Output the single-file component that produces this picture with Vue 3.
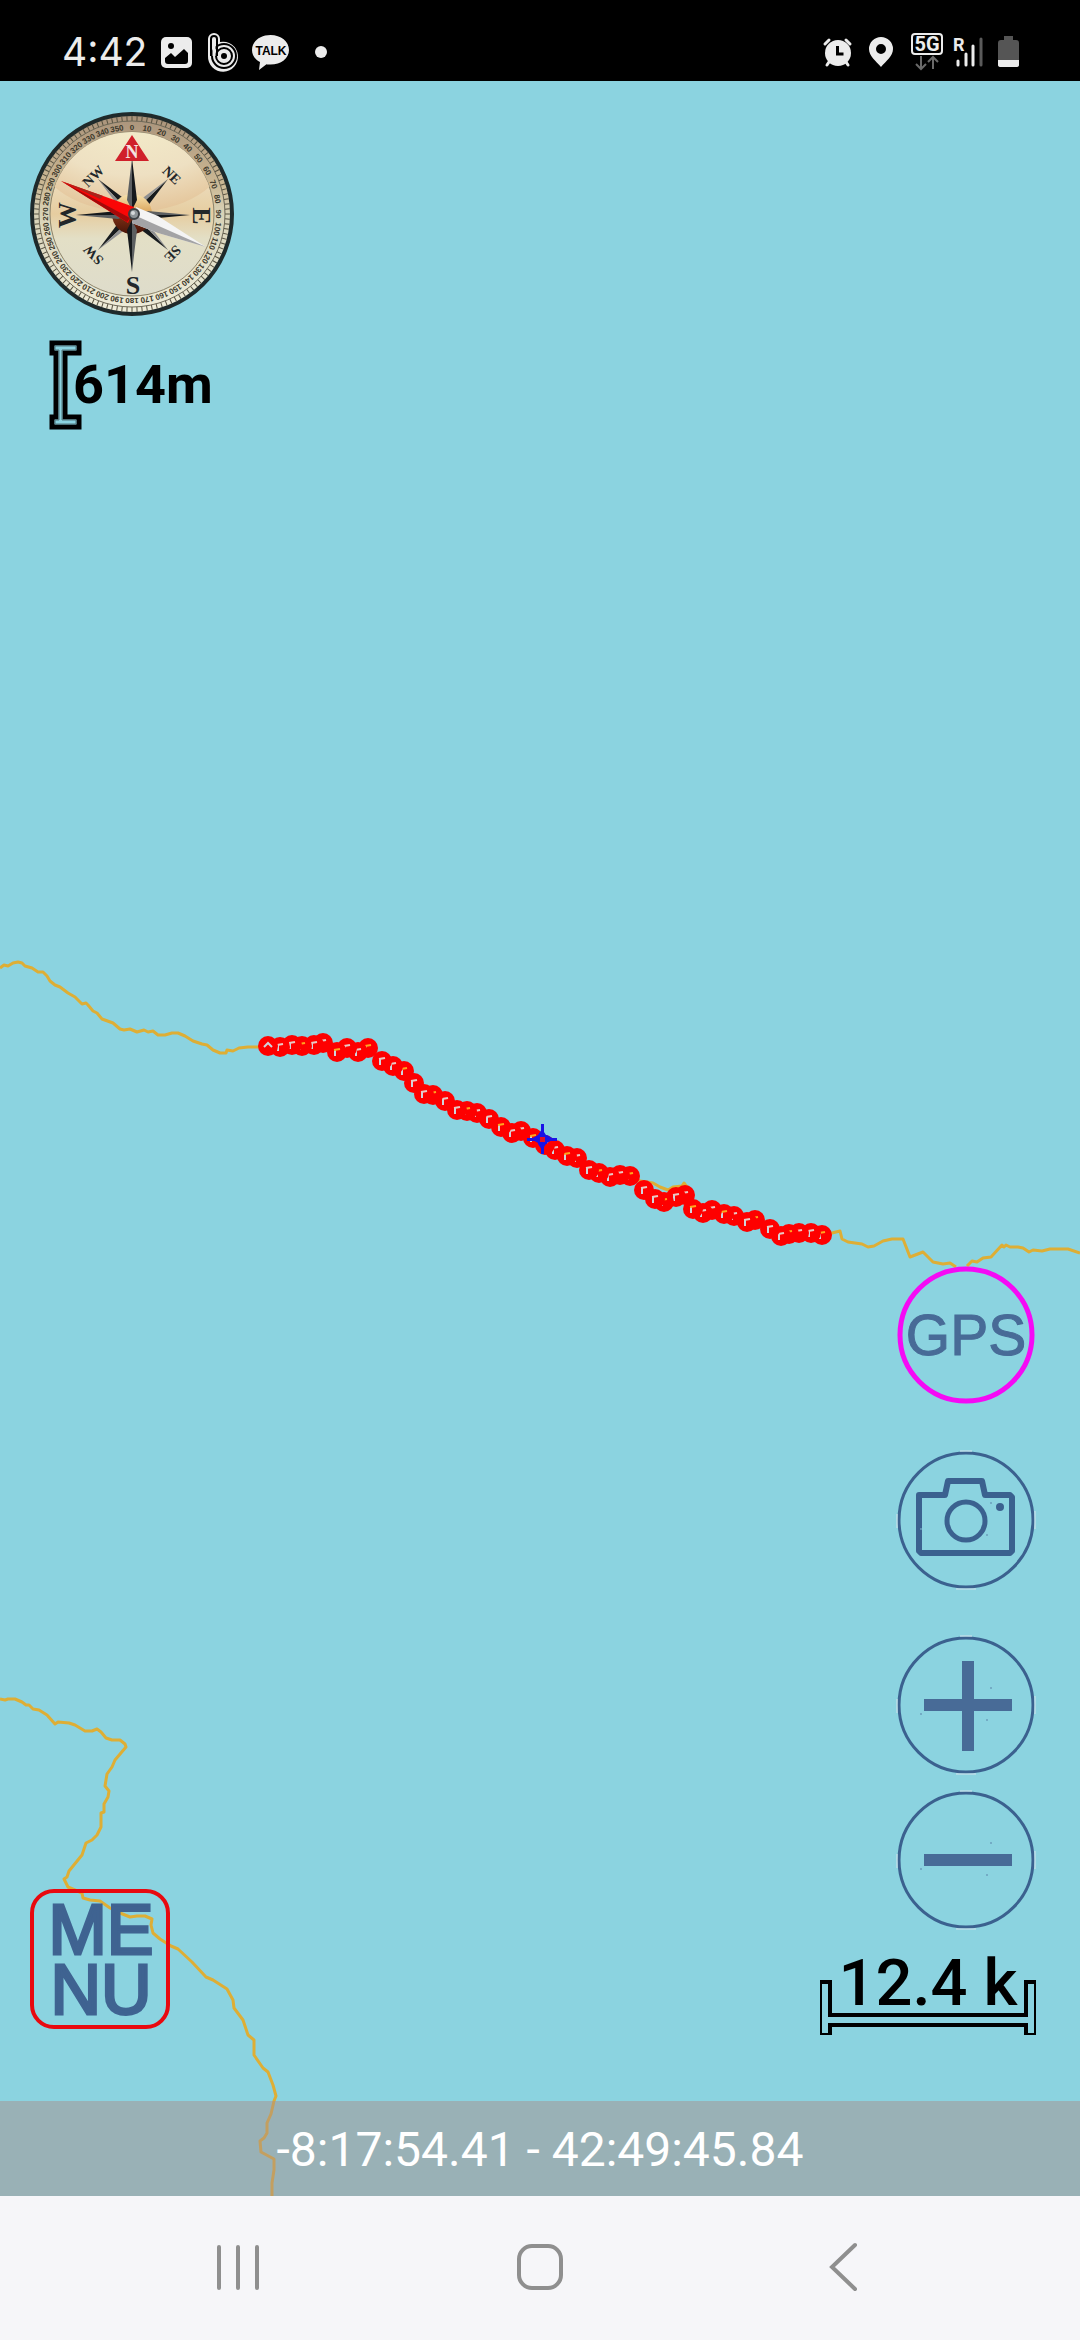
<script setup>
const trackPoints = [
  [268, 1046], [280, 1047], [292, 1045], [302, 1046], [314, 1045], [323, 1043],
  [337, 1052], [347, 1048], [358, 1052], [368, 1048], [382, 1061], [393, 1066],
  [404, 1071], [414, 1083], [424, 1094], [433, 1095], [445, 1101], [457, 1110],
  [467, 1111], [477, 1113], [489, 1119], [501, 1127], [512, 1133], [521, 1131],
  [533, 1138], [545, 1145], [555, 1150], [567, 1156], [577, 1158], [589, 1170],
  [599, 1173], [610, 1177], [620, 1175], [630, 1176], [644, 1190], [655, 1199],
  [664, 1202], [676, 1197], [685, 1195], [693, 1209], [703, 1213], [712, 1210],
  [724, 1214], [734, 1216], [747, 1222], [755, 1220], [770, 1229], [781, 1236],
  [789, 1234], [799, 1233], [811, 1233], [822, 1235],
].reverse()

const bearings = Array.from({ length: 36 }, (_, i) => i * 10)
const ticks = Array.from({ length: 120 }, (_, i) => i * 3)

const specks = [[95, 53], [25, 79], [91, 85]]
</script>

<template>
  <div class="screen">
    <header class="status">
      <div class="status-left">
        <time class="clock">4:42</time>
        <svg class="i-photo" width="31" height="31" viewBox="0 0 31 31" aria-hidden="true">
          <rect width="31" height="31" rx="5" fill="#ececec" />
          <circle cx="10" cy="9" r="3" fill="#000" />
          <path d="M4 24v-3l6-5 4 4 9-8 4 4v8q0 3-3 3H7q-3 0-3-3z" fill="#000" />
        </svg>
        <svg class="i-b" width="31" height="39" viewBox="0 0 31 39" fill="none" aria-hidden="true">
          <path d="M0 23V6a6 6 0 0 1 12 0v3a15 15 0 1 1-12 14z" fill="#ececec" />
          <path d="M3 23V6a3 3 0 0 1 6 0v17" stroke="#000" stroke-width="2" />
          <circle cx="16" cy="23" r="12" stroke="#000" stroke-width="2" />
          <circle cx="16" cy="23" r="8" stroke="#000" stroke-width="2" />
          <circle cx="16" cy="23" r="3" fill="#000" />
          <path d="M6 6v17" stroke="#ececec" stroke-width="3" />
        </svg>
        <svg class="i-talk" width="37" height="35" viewBox="0 0 37 35" aria-hidden="true">
          <path d="M18.500 0C29 0 37 6.500 37 15s-8 14.500-18.500 14.500c-2 0-3 0-4-.3L7 35l1-8C3 24.500 0 20 0 15 0 6.500 8 0 18.500 0z" fill="#ececec" />
          <text x="19" y="20" class="talk-text">TALK</text>
        </svg>
        <span class="dot"></span>
      </div>
      <div class="status-right">
        <svg width="29" height="29" viewBox="0 0 29 29" aria-hidden="true">
          <g stroke="#ececec" stroke-linecap="round" fill="none">
            <path d="M2 6l4-4M27 6l-4-4" stroke-width="3" />
            <path d="M6 24l-2 3M23 24l2 3" stroke-width="3" />
          </g>
          <circle cx="15" cy="15" r="13" fill="#ececec" />
          <path d="M14.500 8v8h6" fill="none" stroke="#000" stroke-width="3" />
        </svg>
        <svg class="i-pin" width="24" height="30" viewBox="0 0 24 30" aria-hidden="true">
          <path d="M12 0a12 12 0 0 1 12 12c0 7-7 12-12 18C7 24 0 19 0 12A12 12 0 0 1 12 0zm0 7a5 5 0 1 0 0 10 5 5 0 0 0 0-10z" fill="#ececec" fill-rule="evenodd" />
        </svg>
        <svg class="i-5g" width="32" height="38" viewBox="0 0 32 38" aria-hidden="true">
          <rect x="1" y="1" width="30" height="20" rx="3" fill="none" stroke="#ececec" stroke-width="2" />
          <text x="16" y="18" class="g5-text">5G</text>
          <path d="M10 23v12M5 31l5 5 5-5M22 36V24M17 29l5-5 5 5" fill="none" stroke="#6a6a6a" stroke-width="2" />
        </svg>
        <svg class="i-signal" width="31" height="30" viewBox="0 0 31 30" aria-hidden="true">
          <text x="0" y="14" class="r-text">R</text>
          <g stroke-width="3" stroke-linecap="round">
            <path d="M5 24v4M13 17v11M20 9v19" stroke="#ececec" />
            <path d="M28 2v26" stroke="#5a5a5a" />
          </g>
        </svg>
        <svg class="i-battery" width="21" height="32" viewBox="0 0 21 32" aria-hidden="true">
          <path d="M6 0h9v4h3q3 0 3 3v17H0V7q0-3 3-3h3z" fill="#555" />
          <path d="M0 24h21v5q0 2-3 2H3q-3 0-3-2z" fill="#ececec" />
        </svg>
      </div>
    </header>

    <main class="map">
      <svg class="map-layer" viewBox="0 81 1080 2115" preserveAspectRatio="xMidYMid slice" aria-hidden="true">
        <g fill="none" stroke="#deae35" stroke-width="3" stroke-linejoin="round">
          <polyline points="0,968 4,965 8,966 13,963 18,962 22,963 25,966 32,968 38,972 43,972 47,976 50,981 55,985 60,987 68,993 75,997 82,1004 86,1003 88,1005 93,1011 97,1013 102,1019 113,1023 120,1029 124,1030 130,1029 137,1032 144,1030 148,1032 153,1031 158,1035 165,1035 172,1033 178,1033 185,1036 193,1041 202,1044 207,1045 213,1050 220,1053 226,1053 227,1050 233,1051 239,1048 248,1047 262,1047" />
          <polyline points="630,1176 640,1181 653,1183 660,1187 668,1190 673,1187 682,1186 684,1183 687,1187" />
          <polyline points="822,1235 832,1233 840,1231 842,1239 848,1242 862,1244 868,1247 874,1246 883,1241 892,1239 903,1239 910,1257 923,1252 933,1262 943,1264 950,1263 956,1267" />
          <polyline points="967,1266 972,1261 977,1262 983,1258 991,1257 1002,1245 1004,1247 1006,1245 1010,1247 1018,1247 1023,1248 1029,1252 1033,1250 1042,1251 1050,1249 1068,1249 1080,1253" />
          <polyline points="0,1699 5,1700 8,1699 15,1699 22,1702 26,1705 29,1705 33,1709 39,1710 47,1715 55,1724 58,1722 69,1723 75,1725 85,1731 92,1731 97,1729 101,1732 106,1738 112,1740 120,1740 125,1744 126,1747 115,1760 112,1767 107,1774 105,1786 109,1791 108,1797 104,1804 104,1812 101,1813 101,1827 97,1835 92,1840 86,1843 82,1855 69,1871 67,1877 64,1879 68,1887 82,1893 83,1898 90,1900 100,1901 110,1908 120,1913 130,1917 137,1916 145,1916 152,1919 151,1925 153,1933 160,1939 171,1946 178,1949 192,1962 206,1977 213,1980 227,1989 233,2000 234,2008 243,2020 248,2035 254,2040 254,2055 263,2068 268,2072 273,2085 276,2096 274,2101 271,2114 267,2123 267,2133 264,2138 260,2141 261,2152 274,2159 274,2170 272,2183 272,2196" />
        </g>
        <g v-for="([x, y], i) in trackPoints" :key="i" :transform="`translate(${x} ${y})`">
          <circle r="10" fill="#fe0000" />
          <path v-if="i === trackPoints.length - 1" d="M-4 1l4-4 4 4" fill="none" stroke="#cfd3dc" stroke-width="2" />
          <template v-else>
            <path d="M-2 4v-6" fill="none" stroke="#cfd3dc" stroke-width="2" />
            <path d="M-3-2l6-1" fill="none" :stroke="i % 3 ? '#e9c9c4' : '#ffa51f'" stroke-width="2" />
          </template>
        </g>
        <g fill="#1a12e6">
          <path d="M541 1124h3v30h-3zM527 1138h30v3h-30z" />
          <path d="M542 1129l4 6h-8zM542 1150l4-6h-8zM531 1139l7-4v8zM554 1139l-7-4v8z" />
          <rect x="538" y="1135" width="9" height="9" />
          <rect x="540" y="1137" width="5" height="5" fill="#e0102a" />
        </g>
      </svg>

      <div class="overlay">
        <div class="top-tools">
          <svg class="compass" viewBox="0 0 204 204" role="img" aria-label="Compass">
            <defs>
              <linearGradient id="ring" x1="0" y1="0" x2="0" y2="1">
                <stop offset="0" stop-color="#a8927a" />
                <stop offset=".35" stop-color="#cbb894" />
                <stop offset=".5" stop-color="#d8d3b8" />
                <stop offset="1" stop-color="#f0eedb" />
              </linearGradient>
              <linearGradient id="face" x1="0" y1="0" x2="0" y2="1">
                <stop offset="0" stop-color="#f0e8c6" />
                <stop offset=".3" stop-color="#ecdcbc" />
                <stop offset=".5" stop-color="#e6cda0" />
                <stop offset=".65" stop-color="#e3dfc6" />
                <stop offset="1" stop-color="#dedccb" />
              </linearGradient>
              <radialGradient id="gloss" cx=".5" cy=".2" r=".8">
                <stop offset="0" stop-color="#f3ecca" />
                <stop offset=".6" stop-color="#eee0c2" />
                <stop offset="1" stop-color="#e4c59a" />
              </radialGradient>
              <linearGradient id="ball" x1="0" y1="0" x2="0" y2="1">
                <stop offset="0" stop-color="#f7e3ae" />
                <stop offset=".45" stop-color="#dba75e" />
                <stop offset=".55" stop-color="#7a3015" />
                <stop offset="1" stop-color="#4a1408" />
              </linearGradient>
              <clipPath id="faceClip"><circle cx="102" cy="102" r="82" /></clipPath>
            </defs>
            <circle cx="102" cy="102" r="100" fill="url(#ring)" stroke="#1f2a2b" stroke-width="4" />
            <g stroke="#55503f" stroke-width="1">
              <line v-for="t in ticks" :key="t" x1="102" y1="4" x2="102" y2="9" :transform="`rotate(${t} 102 102)`" />
            </g>
            <circle cx="102" cy="102" r="93" fill="none" stroke="#6d6857" stroke-width="1" />
            <g class="bearing">
              <text v-for="b in bearings" :key="b" x="102" y="18" :transform="`rotate(${b} 102 102)`">{{ b }}</text>
            </g>
            <circle cx="102" cy="102" r="82" fill="url(#face)" stroke="#8b8268" stroke-width="1" />
            <ellipse cx="102" cy="42" rx="94" ry="58" fill="url(#gloss)" clip-path="url(#faceClip)" />
            <g fill="#171b1e">
              <path d="M138 67l-30 40-6-6zM138 138l-40-30 6-6zM68 138l30-40 6 6zM68 67l40 30-6 6z" />
            </g>
            <g fill="#8f9092">
              <path d="M138 67l-40 30 4 4zM138 138l-30-40-4 4zM68 138l40-30-4-4zM68 67l30 40 4-4z" />
            </g>
            <circle cx="102" cy="102" r="20" fill="url(#ball)" />
            <path d="M102 46l5 42-5 10zM160 103l-42 4-10-4zM102 160l-5-42 5-10zM46 103l42-4 10 4z" fill="#15191c" />
            <path d="M102 46l-5 42 5 10zM160 103l-42-4-10 4zM102 160l5-42-5-10zM46 103l42 4 10-4z" fill="#5c5f61" />
            <path d="M102 23l17 26H85z" fill="#d0202a" />
            <g class="rose">
              <text x="102" y="46" class="rose-n">N</text>
              <text x="103" y="182">S</text>
              <text x="0" y="9" transform="translate(37 103) rotate(-90)">W</text>
              <text x="0" y="9" transform="translate(172 104) rotate(90)">E</text>
              <g class="rose-minor">
                <text x="0" y="5" transform="translate(63 64) rotate(-45)">NW</text>
                <text x="0" y="5" transform="translate(142 63) rotate(45)">NE</text>
                <text x="0" y="5" transform="translate(143 142) rotate(135)">SE</text>
                <text x="0" y="5" transform="translate(63 143) rotate(-135)">SW</text>
              </g>
            </g>
            <path d="M31 69l73 26-6 16z" fill="#fb0606" />
            <path d="M31 69l69 37-3 4z" fill="#a30a0a" />
            <path d="M31 69l42 15-3 3z" fill="#a8251c" />
            <path d="M106 95l22 9 48 31-48-14-26-10z" fill="#f4f4f4" />
            <path d="M104 103l72 32-48-14-26-10z" fill="#a3a3a5" />
            <circle cx="104" cy="102" r="5" fill="#8d9497" stroke="#3b4043" stroke-width="2" />
            <circle cx="103" cy="101" r="2" fill="#d6dadb" />
          </svg>

          <div class="v-scale">
            <svg width="33" height="90" viewBox="0 0 33 90" aria-hidden="true">
              <path d="M3 3h27v10H16v64h14v10H3V77h4V13H3z" fill="none" stroke="#000" stroke-width="5" />
              <path d="M6 6h21v4H13v70h14v4H6v-4h4V10H6z" fill="none" stroke="#53777d" stroke-width="1" />
            </svg>
            <span>614m</span>
          </div>
        </div>

        <div class="bottom-tools">
          <button class="menu" type="button" aria-label="Menu"><span>ME</span><span>NU</span></button>

          <div class="right-tools">
            <button class="round gps" type="button">
              <svg viewBox="0 0 140 140">
                <circle cx="70" cy="70" r="66" fill="none" stroke="#f50af5" stroke-width="5" />
                <text x="70" y="90" class="gps-text">GPS</text>
              </svg>
            </button>
            <button class="round camera" type="button" aria-label="Camera">
              <svg viewBox="0 0 140 140" fill="none" stroke="#3b618f">
                <circle cx="70" cy="70" r="67" stroke-width="3" />
                <path d="M64 1h12M60 139h20M1 64v14M139 61v18" stroke="#d5e3ec" stroke-width="1" />
                <path d="M23 45h26l3-14h34l3 14h25l2 2v54l-2 2H25l-2-2z" stroke-width="6" stroke-linejoin="round" />
                <circle cx="70" cy="71" r="19" stroke-width="5" />
                <circle cx="104" cy="57" r="4" fill="#3b618f" stroke="none" />
                <circle v-for="([x, y], i) in specks" :key="i" :cx="x" :cy="y" r="1" fill="#6b9fbd" stroke="none" />
              </svg>
            </button>
            <button class="round zoom-in" type="button" aria-label="Zoom in">
              <svg viewBox="0 0 140 140" fill="none" stroke="#3b618f">
                <circle cx="70" cy="70" r="67" stroke-width="3" />
                <path d="M64 1h12M60 139h20M1 64v14M139 61v18" stroke="#d5e3ec" stroke-width="1" />
                <path d="M28 70h88M72 26v90" stroke="#486b97" stroke-width="12" />
                <circle v-for="([x, y], i) in specks" :key="i" :cx="x" :cy="y" r="1" fill="#6b9fbd" stroke="none" />
              </svg>
            </button>
            <button class="round zoom-out" type="button" aria-label="Zoom out">
              <svg viewBox="0 0 140 140" fill="none" stroke="#3b618f">
                <circle cx="70" cy="70" r="67" stroke-width="3" />
                <path d="M64 1h12M60 139h20M1 64v14M139 61v18" stroke="#d5e3ec" stroke-width="1" />
                <path d="M28 70h88" stroke="#486b97" stroke-width="12" />
                <circle v-for="([x, y], i) in specks" :key="i" :cx="x" :cy="y" r="1" fill="#6b9fbd" stroke="none" />
              </svg>
            </button>
            <div class="h-scale">
              <span>12.4 k</span>
              <svg viewBox="0 0 216 55" aria-hidden="true">
                <path fill="#000" fill-rule="evenodd" d="M0 0h12v33h192V0h12v55h-12v-8H12v8H0zM2 4v49h6V41h200v12h6V4h-6v33H8V4z" />
                <path d="M8 37h200v6H8z" fill="#8bd3e0" />
              </svg>
            </div>
          </div>
        </div>
      </div>

      <div class="coords">-8:17:54.41 - 42:49:45.84</div>
    </main>

    <nav class="nav">
      <button type="button" aria-label="Recent apps">
        <svg width="48" height="48" viewBox="0 0 48 48" fill="none" stroke="#8f8f8f" stroke-width="4" stroke-linecap="round">
          <path d="M5 3v41M24 3v41M43 3v41" />
        </svg>
      </button>
      <button type="button" aria-label="Home">
        <svg width="48" height="48" viewBox="0 0 48 48" fill="none" stroke="#8f8f8f" stroke-width="4">
          <rect x="3" y="2" width="42" height="42" rx="13" />
        </svg>
      </button>
      <button type="button" aria-label="Back">
        <svg width="48" height="48" viewBox="0 0 48 48" fill="none" stroke="#8f8f8f" stroke-width="4" stroke-linecap="round">
          <path d="M37 1L14 23l23 22" />
        </svg>
      </button>
    </nav>
  </div>
</template>

<style>
body {
  margin: 0;
}
</style>

<style scoped>
.screen {
  display: flex;
  flex-direction: column;
  min-height: 100vh;
  background: #8bd3e0;
  font-family: Roboto, "Liberation Sans", sans-serif;
}

button {
  margin: 0;
  padding: 0;
  border: 0;
  background: none;
  font: inherit;
}

svg {
  display: block;
  overflow: visible;
}

.status {
  display: flex;
  justify-content: space-between;
  box-sizing: border-box;
  height: 81px;
  padding: 23px 61px 0 62px;
  background: #000;
  color: #ececec;
}

.status-left,
.status-right {
  display: flex;
  align-items: center;
}

.clock {
  width: 99px;
  font: 400 39px/48px Inter, Roboto, sans-serif;
}

.i-b {
  margin-left: 16px;
}

.i-talk {
  margin-left: 13px;
}

.dot {
  width: 12px;
  height: 12px;
  margin-left: 26px;
  border-radius: 50%;
  background: #ececec;
}

.i-pin {
  margin-left: 17px;
}

.i-5g {
  margin-left: 18px;
}

.i-signal {
  margin-left: 10px;
}

.i-battery {
  margin-left: 14px;
}

.talk-text {
  font: 700 12px "Liberation Sans", sans-serif;
  text-anchor: middle;
  fill: #000;
}

.g5-text {
  font: 700 20px Roboto, sans-serif;
  text-anchor: middle;
  fill: #ececec;
}

.r-text {
  font: 700 18px Roboto, sans-serif;
  fill: #ececec;
}

.map {
  position: relative;
  display: flex;
  flex: 1;
  flex-direction: column;
  overflow: hidden;
}

.map-layer {
  position: absolute;
  inset: 0;
  width: 100%;
  height: 100%;
  overflow: hidden;
}

.overlay {
  position: relative;
  display: flex;
  flex: 1;
  flex-direction: column;
  justify-content: space-between;
  padding: 31px 44px 66px 30px;
}

.compass {
  width: 204px;
  height: 204px;
}

.bearing {
  font: 700 8px "Liberation Sans", sans-serif;
  text-anchor: middle;
  fill: #3c382b;
}

.rose {
  font: 700 26px "Liberation Serif", serif;
  text-anchor: middle;
  fill: #22272a;
}

.rose-n {
  font-size: 18px;
  fill: #f3e4e0;
}

.rose-minor {
  font-size: 14px;
}

.v-scale {
  display: flex;
  align-items: center;
  margin: 24px 0 0 19px;
  font-size: 54px;
  font-weight: 700;
  line-height: 64px;
}

.v-scale span {
  margin-left: -9px;
}

.bottom-tools {
  display: flex;
  align-items: flex-end;
  justify-content: space-between;
}

.menu {
  display: flex;
  flex-direction: column;
  align-items: center;
  justify-content: center;
  box-sizing: border-box;
  width: 140px;
  height: 140px;
  margin-bottom: 6px;
  padding: 2px 0 0 2px;
  border: 4px solid #e8090f;
  border-radius: 24px;
  color: #3f6391;
  font: 400 70px/60px "Liberation Sans", Arial, sans-serif;
  -webkit-text-stroke: 3px #3f6391;
}

.right-tools {
  display: flex;
  flex-direction: column;
  align-items: flex-end;
}

.round {
  width: 140px;
  height: 140px;
}

.gps,
.camera {
  margin-bottom: 45px;
}

.zoom-in {
  margin-bottom: 15px;
}

.gps-text {
  font: 400 57px "Liberation Sans", Arial, sans-serif;
  text-anchor: middle;
  fill: #486b97;
  stroke: #486b97;
  stroke-width: 1px;
}

.h-scale {
  position: relative;
  width: 216px;
  height: 105px;
  text-align: center;
  font-size: 65px;
  font-weight: 500;
  line-height: 106px;
}

.h-scale svg {
  position: absolute;
  bottom: 0;
  left: 0;
  width: 216px;
  height: 55px;
}

.coords {
  position: relative;
  padding-top: 2px;
  background: rgba(167, 143, 140, 0.5);
  color: #fff;
  font-size: 48px;
  line-height: 93px;
  text-align: center;
}

.nav {
  display: grid;
  grid-template-columns: repeat(3, 1fr);
  height: 144px;
  padding: 0 8%;
  background: #f6f6f9;
}

.nav button {
  display: flex;
  align-items: center;
  justify-content: center;
}
</style>
